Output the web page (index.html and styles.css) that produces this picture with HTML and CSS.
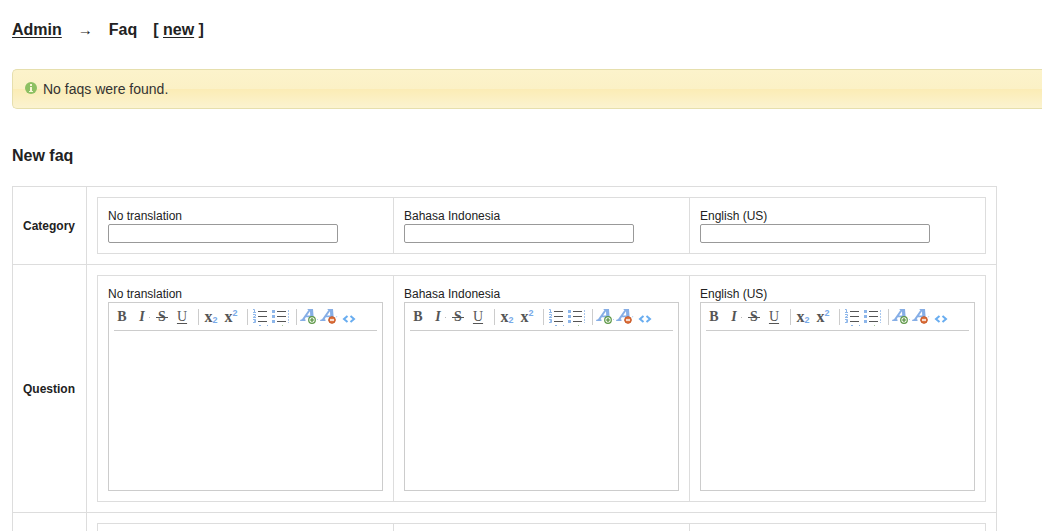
FILE: index.html
```html
<!DOCTYPE html>
<html lang="en">
<head>
<meta charset="utf-8">
<title>Admin - Faq</title>
<link rel="stylesheet" href="styles.css">
</head>
<body>
<svg class="sprite" aria-hidden="true">
  <symbol id="i-info" viewBox="0 0 12 12">
    <circle cx="6" cy="6" r="6" fill="#8dc063"/>
    <path d="M5 2h2v2H5zM5 5h2v4h1v1H4V9h1z" fill="#f8f6d5"/>
  </symbol>
  <symbol id="i-ol" viewBox="0 0 16 18">
    <path d="M6 3.500h9M6 8.500h9M6 13.500h9" stroke="#555" stroke-width="1.200"/>
    <path d="M1 1.500h1.500v3M1 4.500h3M1 6.500h2.500v1.500L1 9.500h3M1 11.500h2.500v1.500h-1.500 1.500v1.500H1M7 17.500h2M15 17.500h1" fill="none" stroke="#8db6ea"/>
  </symbol>
  <symbol id="i-ul" viewBox="0 0 18 18">
    <path d="M6 3.500h9M6 8.500h9M6 13.500h9" stroke="#555" stroke-width="1.200"/>
    <path d="M1 2h3v3H1zM1 7h3v3H1zM1 12h3v3H1z" fill="#8db6ea"/>
    <path d="M17.500 2v13" stroke="#a9c8ef" stroke-dasharray="2 1"/>
    <path d="M11 17.500h1" stroke="#a5c99a"/>
  </symbol>
  <symbol id="i-a" viewBox="0 0 16 16">
    <path d="M0 12l.4-1.200 1.600-.5L8.500 1 7.500.9 7.800 0H13l.8 10.300 1.400.5-.3 1.200H8.500l.3-1.200 1.600-.5-.1-2H5.800l-1.200 2 1.100.5-.3 1.200zM7 6.500h3.200L10 2.200z" fill="#86aee6"/>
  </symbol>
  <symbol id="i-add" viewBox="0 0 18 16">
    <use href="#i-a" width="16" height="16"/>
    <circle cx="12" cy="11" r="3.300" fill="#f2f8ed" stroke="#5d9746" stroke-width="1.200"/>
    <path d="M12 9v4M10 11h4" stroke="#4d8a38" stroke-width="1.200"/>
    <path d="M17 10.500h1" stroke="#b5d2f2"/>
  </symbol>
  <symbol id="i-remove" viewBox="0 0 18 16">
    <use href="#i-a" width="16" height="16"/>
    <circle cx="12" cy="11" r="3.300" fill="#df7541" stroke="#c75522"/>
    <path d="M10 11h4" stroke="#fff" stroke-width="1.500"/>
    <path d="M16 8.500l1-1.500" stroke="#b5d2f2"/>
  </symbol>
  <symbol id="i-code" viewBox="0 0 14 8">
    <path d="M5.500 1L2 4l3.500 3M8.500 1L12 4 8.500 7" fill="none" stroke="#69adf0" stroke-width="2"/>
  </symbol>
</svg>

<main class="page">
  <h1 class="heading crumbs">
    <a href="#">Admin</a>
    <span class="arrow">→</span>
    <span>Faq</span>
    <span class="action">[ <a href="#new">new</a> ]</span>
  </h1>

  <div class="notice" role="status">
    <svg class="notice-icon" aria-hidden="true"><use href="#i-info"/></svg>
    <span>No faqs were found.</span>
  </div>

  <h2 class="heading subhead" id="new">New faq</h2>

  <table class="grid">
    <tr>
      <th scope="row">Category</th>
      <td>
        <table class="grid cells">
          <tr>
            <td><label class="label" for="c0">No translation</label><input class="field" id="c0" type="text"></td>
            <td><label class="label" for="c1">Bahasa Indonesia</label><input class="field" id="c1" type="text"></td>
            <td><label class="label" for="c2">English (US)</label><input class="field" id="c2" type="text"></td>
          </tr>
        </table>
      </td>
    </tr>
    <tr>
      <th scope="row">Question</th>
      <td>
        <table class="grid cells">
          <tr>
            <td>
              <label class="label" for="q0">No translation</label>
              <div class="editor">
                <div class="toolbar" role="toolbar" aria-label="Formatting">
                  <button class="tool bold" type="button">B</button>
                  <button class="tool italic" type="button">I</button>
                  <button class="tool strike" type="button">S</button>
                  <button class="tool under" type="button">U</button>
                  <span class="sep"></span>
                  <button class="tool script low" type="button">x<span>2</span></button>
                  <button class="tool script high" type="button">x<span>2</span></button>
                  <span class="sep"></span>
                  <button class="tool" type="button" aria-label="Numbered list"><svg class="ol"><use href="#i-ol"/></svg></button>
                  <button class="tool" type="button" aria-label="Bulleted list"><svg class="ul"><use href="#i-ul"/></svg></button>
                  <span class="sep"></span>
                  <button class="tool" type="button" aria-label="Add style"><svg class="style"><use href="#i-add"/></svg></button>
                  <button class="tool" type="button" aria-label="Remove style"><svg class="style"><use href="#i-remove"/></svg></button>
                  <button class="tool" type="button" aria-label="Source"><svg class="code"><use href="#i-code"/></svg></button>
                </div>
                <textarea class="area" id="q0"></textarea>
              </div>
            </td>
            <td>
              <label class="label" for="q1">Bahasa Indonesia</label>
              <div class="editor">
                <div class="toolbar" role="toolbar" aria-label="Formatting">
                  <button class="tool bold" type="button">B</button>
                  <button class="tool italic" type="button">I</button>
                  <button class="tool strike" type="button">S</button>
                  <button class="tool under" type="button">U</button>
                  <span class="sep"></span>
                  <button class="tool script low" type="button">x<span>2</span></button>
                  <button class="tool script high" type="button">x<span>2</span></button>
                  <span class="sep"></span>
                  <button class="tool" type="button" aria-label="Numbered list"><svg class="ol"><use href="#i-ol"/></svg></button>
                  <button class="tool" type="button" aria-label="Bulleted list"><svg class="ul"><use href="#i-ul"/></svg></button>
                  <span class="sep"></span>
                  <button class="tool" type="button" aria-label="Add style"><svg class="style"><use href="#i-add"/></svg></button>
                  <button class="tool" type="button" aria-label="Remove style"><svg class="style"><use href="#i-remove"/></svg></button>
                  <button class="tool" type="button" aria-label="Source"><svg class="code"><use href="#i-code"/></svg></button>
                </div>
                <textarea class="area" id="q1"></textarea>
              </div>
            </td>
            <td>
              <label class="label" for="q2">English (US)</label>
              <div class="editor">
                <div class="toolbar" role="toolbar" aria-label="Formatting">
                  <button class="tool bold" type="button">B</button>
                  <button class="tool italic" type="button">I</button>
                  <button class="tool strike" type="button">S</button>
                  <button class="tool under" type="button">U</button>
                  <span class="sep"></span>
                  <button class="tool script low" type="button">x<span>2</span></button>
                  <button class="tool script high" type="button">x<span>2</span></button>
                  <span class="sep"></span>
                  <button class="tool" type="button" aria-label="Numbered list"><svg class="ol"><use href="#i-ol"/></svg></button>
                  <button class="tool" type="button" aria-label="Bulleted list"><svg class="ul"><use href="#i-ul"/></svg></button>
                  <span class="sep"></span>
                  <button class="tool" type="button" aria-label="Add style"><svg class="style"><use href="#i-add"/></svg></button>
                  <button class="tool" type="button" aria-label="Remove style"><svg class="style"><use href="#i-remove"/></svg></button>
                  <button class="tool" type="button" aria-label="Source"><svg class="code"><use href="#i-code"/></svg></button>
                </div>
                <textarea class="area" id="q2"></textarea>
              </div>
            </td>
          </tr>
        </table>
      </td>
    </tr>
    <tr>
      <th scope="row"></th>
      <td>
        <table class="grid cells tall">
          <tr><td></td><td></td><td></td></tr>
        </table>
      </td>
    </tr>
  </table>
</main>
</body>
</html>
```

FILE: styles.css
```css
* { box-sizing: border-box; }

body {
  margin: 0;
  background: #fff;
  color: #222;
  font: 12px/16px "Liberation Sans", Arial, sans-serif;
}

.sprite { display: none; }

.page {
  height: 100vh;
  overflow: hidden;
  padding: 20px 0 0 12px;
}

.heading {
  margin: 0;
  font-size: 16px;
  line-height: 20px;
  font-weight: bold;
}

.heading a {
  color: inherit;
  text-decoration: underline 1px;
  text-underline-offset: 2px;
  text-decoration-skip-ink: none;
}

.crumbs { display: flex; }
.arrow { margin: 0 16px; font-size: 15px; font-weight: normal; }
.action { margin-left: 16px; }

.notice {
  display: flex;
  align-items: center;
  gap: 6px;
  height: 40px;
  margin: 29px 0 37px;
  padding: 0 12px;
  border: 1px solid #e6dfad;
  border-right: 0;
  border-radius: 5px 0 0 5px;
  background: linear-gradient(#fcf3cb, #fbf1c6 50%, #fbecb5 50%, #fbf3d0);
  color: #333;
  font-size: 14px;
}

.crumbs + .notice { margin-top: 29px; }

.notice-icon { width: 12px; height: 12px; margin-bottom: 2px; }

.subhead { margin-bottom: 20px; }

.grid {
  border-collapse: separate;
  border-spacing: 0;
  border: 1px solid #ddd;
  border-width: 1px 0 0 1px;
}

.grid th,
.grid td {
  padding: 10px;
  border: 1px solid #ddd;
  border-width: 0 1px 1px 0;
  text-align: left;
}

.grid th { width: 74px; }
.cells td { min-width: 296px; }
.tall td { height: 216px; }

.label { display: block; }

.field {
  display: block;
  width: 230px;
  height: 19px;
  padding: 1px 3px;
  border: 1px solid #999;
  border-radius: 2px;
  background: #fff;
  font: inherit;
}

.editor {
  width: 275px;
  padding: 0 5px;
  border: 1px solid #ccc;
}

.toolbar {
  display: flex;
  align-items: center;
  gap: 4px;
  height: 28px;
  border-bottom: 1px solid #ccc;
}

.tool {
  display: flex;
  align-items: center;
  justify-content: center;
  width: 16px;
  height: 16px;
  padding: 0;
  border: 0;
  background: none;
  color: #555;
  font: 14px/16px "Liberation Serif", "Times New Roman", serif;
}

.tool svg { flex: none; }

.bold { font-weight: bold; }
.italic {
  font-style: italic;
  font-weight: bold;
  background: linear-gradient(#bbb, #bbb) right 8px / 1px 1px no-repeat;
}
.strike {
  font-weight: bold;
  background: linear-gradient(#555, #555) center 8px / 12px 1px no-repeat;
}
.under { text-decoration: underline; text-underline-offset: 2px; }

.script { font-weight: bold; font-size: 16px; }
.script span {
  color: #78aae8;
  font: bold 9px/9px "Liberation Sans", Arial, sans-serif;
}
.low span { align-self: flex-end; }
.high span { align-self: flex-start; }

.sep {
  width: 1px;
  height: 16px;
  margin-left: 4px;
  background: #ccc;
}

.ol { width: 16px; height: 18px; }
.ul { width: 18px; height: 18px; }
.style { width: 18px; height: 16px; }
.code { width: 14px; height: 8px; margin-top: 5px; }

.area {
  display: block;
  width: 100%;
  height: 159px;
  padding: 4px;
  border: 0;
  outline: 0;
  background: none;
  resize: none;
  font: inherit;
}
```
